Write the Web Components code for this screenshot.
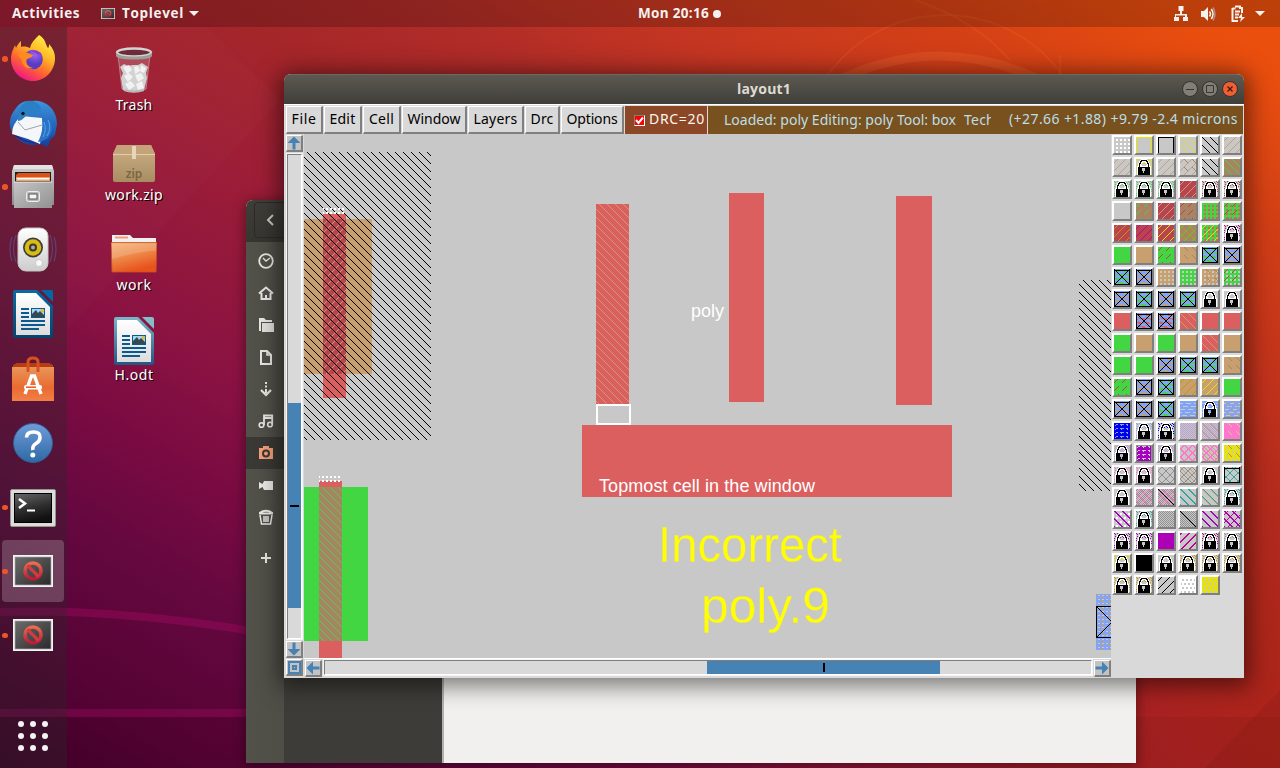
<!DOCTYPE html>
<html lang="en">
<head>
<meta charset="utf-8">
<title>Desktop</title>
<style>
html,body{margin:0;height:100%;overflow:hidden;background:#700a40}
</style>
</head>
<body>
<desktop-shell></desktop-shell>
<script>
function def(name, css, html, ready) {
  const t = document.createElement('template');
  t.innerHTML = '<style>*{box-sizing:border-box}' + css + '</style>' + html;
  customElements.define(name, class extends HTMLElement {
    connectedCallback() {
      if (this.shadowRoot) return;
      const root = this.attachShadow({ mode: 'open' });
      root.appendChild(document.importNode(t.content, true));
      if (ready) ready.call(this, root);
    }
  });
}

/* Text tracked so that it fills a given width */
def('fit-text', ':host{display:inline-block;white-space:nowrap}span{display:inline-block}', '<span><slot></slot></span>', function (root) {
  const s = root.querySelector('span'), want = +this.getAttribute('w'), n = this.textContent.length;
  const have = s.getBoundingClientRect().width;
  if (have) s.style.letterSpacing = (want - have) / n + 'px';
  this.style.width = want + 'px';
});

const noEntry = (id, w, h) => `<svg width="${w}" height="${h}" viewBox="0 0 40 32"><defs><linearGradient id="${id}a" x2="1" y2="1"><stop stop-color="#6c6c6c"/><stop offset="1" stop-color="#2b2b2b"/></linearGradient><linearGradient id="${id}b" x2="0" y2="1"><stop stop-color="#ef6a50"/><stop offset="1" stop-color="#b91c38"/></linearGradient></defs><rect width="40" height="32" fill="#f4f4f2"/><rect x="2" y="2" width="36" height="28" fill="url(#${id}a)" stroke="#aaa" stroke-width=".7"/><circle cx="20" cy="16" r="8" fill="none" stroke="url(#${id}b)" stroke-width="3.6"/><path d="M14.4 10.4l11.2 11.2" stroke="#d43a40" stroke-width="3.4"/></svg>`;

const writer = (id, a, b, c) => `<svg width="40" height="48" viewBox="0 0 40 48"><defs><linearGradient id="${id}" x2="0" y2="1"><stop stop-color="${a}"/><stop offset="1" stop-color="${b}"/></linearGradient><linearGradient id="${id}p" x2="0" y2="1"><stop stop-color="#fff"/><stop offset="1" stop-color="#dcdcdc"/></linearGradient></defs><path d="M2 0h22l16 16v30q0 2-2 2H2q-2 0-2-2V2q0-2 2-2z" fill="url(#${id})"/><path d="M3 3h20l14 14v28H3z" fill="url(#${id}p)"/><path d="M28 0h10q2 0 2 2v10z" fill="${c}"/><path d="M8 19h8M8 23h8M8 27h8M8 31h24M8 35h24M8 39h18" stroke="#0a5a90" stroke-width="2"/><path d="M18 18h14v10H18z" fill="#0a5a90"/><path d="M19 19h12v8H19z" fill="#a6d8f4"/><path d="M19 27v-3l4-4 2 3 2-2 4 4v2z" fill="#354a50"/><circle cx="29.5" cy="20.5" r="1.8" fill="#e5b73b"/></svg>`;

const ART = {
  firefox: `<svg width="46" height="48" viewBox="0 0 46 48"><defs><linearGradient id="fa" x1=".85" y1=".05" x2=".3" y2="1"><stop stop-color="#fff14a"/><stop offset=".35" stop-color="#ffbc27"/><stop offset=".65" stop-color="#ff6a2c"/><stop offset="1" stop-color="#f0138a"/></linearGradient><radialGradient id="fb" cx=".6" cy=".25"><stop stop-color="#a064ee"/><stop offset="1" stop-color="#5a3cc4"/></radialGradient></defs><path d="M29 1c7 4 6 9 9 13 1-1 1-2 1-4 4 4 6 9 6 14 0 13-10 23-22 23S1 37 1 25C1 18 4 14 5 11l1 3c1-3 4-6 5-7v6c3-1 7 0 9 1 1-5 4-8 9-13z" fill="url(#fa)"/><circle cx="23" cy="25.500" r="9.800" fill="url(#fb)"/><path d="M7 21c3-3 6-4 11-2l5 2c-1 3-4 3-6 4-2 4 1 8 6 9-6 2-11-2-11-8-2-2-3-4-5-5z" fill="#ff8a1f"/><path d="M22 17c4-1 9 1 10 4l-5-1z" fill="#8b3ccf"/></svg>`,
  thunderbird: `<svg width="50" height="48" viewBox="0 0 50 48" style="margin-top:4px"><defs><linearGradient id="ta" x2="0" y2="1"><stop stop-color="#3d94de"/><stop offset="1" stop-color="#133f9a"/></linearGradient></defs><path d="M20 1l4 0c13-2 25 8 25 23l-2 11-5 5-2 7-7-3q-20 5-30-14Q-1 19 8 8q5-7 12-7z" fill="url(#ta)"/><path d="M5 35q10 8 28 9l-13-3q-10-2-15-11z" fill="#321d75"/><path d="M13 16l21 2 1 8-3 18-12-5-16-5q0-10 9-18z" fill="#f4f6f9"/><path d="M10 22l7 8 17-5" fill="none" stroke="#9ca5ab"/><path d="M20 1c-8 4-11 9-10 20 7-1 7-7 13-8 9 0 12-2 9-7-3-4-8-6-12-5z" fill="#2b7fc4"/><circle cx="15" cy="13.500" r="1.700" fill="#111"/><path d="M34 18c1 10 0 16-4 24 7-1 12-4 14-12 1-10-6-12-10-12z" fill="#2a72c8"/><path d="M36 22q3 8-1 15M40 20q4 8-1 16" stroke="#4fa4e8" fill="none"/></svg>`,
  files: `<svg width="44" height="46" viewBox="0 0 44 46"><defs><linearGradient id="ca" x2="0" y2="1"><stop stop-color="#cfcfcf"/><stop offset="1" stop-color="#8c8c8c"/></linearGradient><linearGradient id="cb" x2="1" y2="1"><stop stop-color="#c5c5c5"/><stop offset="1" stop-color="#929292"/></linearGradient></defs><path d="M3 2h38l2 6v34H1V8z" fill="url(#ca)"/><path d="M3 2h38l1 4H2z" fill="#e3e3e3"/><path d="M4 9h36v10H4z" fill="#1e1e1e"/><path d="M5 12l2-2h32v8H5z" fill="#d9521d"/><path d="M5 14h34v4H5z" fill="#f0a064"/><path d="M6 15h32v1.500H6z" fill="#fff"/><path d="M3 19h38v26H3z" fill="url(#cb)"/><path d="M3 19h38" stroke="#e8e8e8"/><rect x="15.500" y="28.500" width="13" height="10" rx="2" fill="#b8b8b8" stroke="#eee"/><rect x="18" y="31" width="8" height="5" fill="#f5f5f5" stroke="#555"/></svg>`,
  rhythmbox: `<svg width="50" height="46" viewBox="0 0 50 46"><defs><linearGradient id="ra" x2="0" y2="1"><stop stop-color="#fff"/><stop offset="1" stop-color="#ccc"/></linearGradient></defs><g fill="none" stroke="#5a5690" stroke-opacity=".65" stroke-width="1.200"><path d="M8 8q-5 13 0 27M4 10q-4 12 0 24M42 8q5 13 0 27M46 10q4 12 0 24"/></g><rect x="10" y="1" width="30" height="43" rx="8" fill="url(#ra)" stroke="#c4c4c4"/><circle cx="25" cy="20.500" r="10" fill="#3b3b3b"/><circle cx="25" cy="20.500" r="8.300" fill="#d8bb13"/><circle cx="25" cy="20.500" r="4" fill="#3c3a30"/><circle cx="25" cy="20.500" r="2" fill="#aaa"/><circle cx="31" cy="36" r="3.500" fill="#f9f9f9" stroke="#ccc"/></svg>`,
  writer: writer('wa', '#0a69a5', '#05436d', '#0369a5'),
  software: `<svg width="44" height="46" viewBox="0 0 44 46"><defs><linearGradient id="sa" x2="0" y2="1"><stop stop-color="#e8955a"/><stop offset=".6" stop-color="#ea6b30"/><stop offset="1" stop-color="#f08048"/></linearGradient></defs><path d="M2 9l4-2h32l4 2v5H2z" fill="#b83c12"/><path d="M1 11h42v34H1z" fill="url(#sa)"/><path d="M17 16V6q0-4 5-4t5 4v10" fill="none" stroke="#d9501f" stroke-width="3"/><path d="M14 38l6.500-18h3L30 38" fill="none" stroke="#fff" stroke-width="3.400"/><rect x="13" y="29" width="18" height="4.500" rx="2" fill="#fff"/><path d="M15 31.200h10" stroke="#e8632a" stroke-width="1.600"/></svg>`,
  help: `<svg width="42" height="42" viewBox="0 0 42 42"><defs><linearGradient id="ha" x2="0" y2="1"><stop stop-color="#6f9cda"/><stop offset="1" stop-color="#2e69a4"/></linearGradient></defs><circle cx="21" cy="21" r="19.500" fill="url(#ha)" stroke="#2d5f94"/><path d="M14.500 15.500Q14.500 10 21.500 10T28 15.500Q28 19 24 21.500T21 28" fill="none" stroke="#fff" stroke-width="3.600"/><circle cx="20.800" cy="33" r="2.500" fill="#fff"/></svg>`,
  terminal: `<svg width="46" height="38" viewBox="0 0 46 38" style="margin-top:2px"><defs><linearGradient id="tm" x2=".3" y2="1"><stop stop-color="#666"/><stop offset=".6" stop-color="#2d2d2d"/><stop offset="1" stop-color="#111"/></linearGradient></defs><rect x=".5" y=".5" width="45" height="37" rx="1.500" fill="#dcdcda" stroke="#949490"/><rect x="4.500" y="4.500" width="37" height="29" fill="url(#tm)" stroke="#000"/><path d="M9 10l6 4.500L9 19" fill="none" stroke="#fff" stroke-width="2.600"/><path d="M17 21.500h8" stroke="#fff" stroke-width="2"/></svg>`,
  top1: noEntry('n1', 40, 32),
  top2: noEntry('n2', 40, 32),
  trash: `<svg width="38" height="46" viewBox="0 0 38 46"><path d="M3 8l4 34q12 5 24 0L35 8z" fill="#d7a3aa" fill-opacity=".3" stroke="#d0b0b4" stroke-opacity=".6"/><path d="M5 20l4-3 4 2 5-1 5 0 4-2 6 4-2 6 1 5-3 12q-10 5-21 0L6 31l2-5z" fill="#d2d2d2"/><path d="M8 20l6-2 3 5-5 4zM19 20l4-1 2 5-5 3zM26 18l5 3-2 5-4-2zM9 29l5-3 4 4-5 5zM20 28l6-2 3 5-6 4zM10 37l6-3 4 5-6 4zM21 37l6-3 2 7-6 2z" fill="#f2f2f2"/><ellipse cx="19" cy="5.500" rx="17" ry="4" fill="#6d2b3a" stroke="#d3d3cf" stroke-width="2.400"/><path d="M1 5.500v3q0 4 18 4t18-4v-3q-2 4-18 4T1 5.500z" fill="#9c9c98"/><path d="M9 43q10 3 20 0" fill="none" stroke="#b9b9b9" stroke-width="2"/></svg>`,
  zip: `<svg width="42" height="38" viewBox="0 0 42 38"><defs><linearGradient id="za" x2="0" y2="1"><stop stop-color="#cdb086"/><stop offset="1" stop-color="#a98d62"/></linearGradient></defs><path d="M4 0h34l4 9v26q0 2-2 2H2q-2 0-2-2V9z" fill="url(#za)"/><path d="M4 0h34l4 9H0z" fill="#c4a37b"/><path d="M0 9.500h42" stroke="#e3cda6"/><path d="M19 1h4v13h-4z" fill="#e5d5ba"/><text x="21" y="33" text-anchor="middle" font-family="Noto Sans" font-weight="600" font-size="12" fill="#7a6644">zip</text></svg>`,
  folder: `<svg width="46" height="40" viewBox="0 0 46 40"><defs><linearGradient id="fo" x2=".4" y2="1"><stop stop-color="#f3b274"/><stop offset=".5" stop-color="#ee8b4c"/><stop offset="1" stop-color="#e8531c"/></linearGradient></defs><path d="M1 2h18l3 3h23v9H1z" fill="#f1f1ef"/><path d="M4 3.500h13v2H4z" fill="#f39b74"/><path d="M0 9.500h46L45 39H1z" fill="url(#fo)" stroke="#c9511e" stroke-width=".8"/><path d="M1 10.500h44v7Q25 19 1 26z" fill="#fff" fill-opacity=".16"/></svg>`,
  odt: writer('wo', '#7ab8c8', '#255583', '#84bcc8')
};

def('dock-item', `:host{position:relative;display:flex;align-items:center;justify-content:center;width:62px;height:62px;margin-left:2px;border-radius:4px}
:host([active]){background:rgba(255,255,255,.2)}
:host([running])::before{content:"";position:absolute;left:0;top:29px;width:5.500px;height:5.500px;border-radius:50%;background:#ee5522}svg{display:block}`, '<div></div>', function (r) {
  r.querySelector('div').innerHTML = ART[this.getAttribute('icon')];
});

def('dock-bar', `:host{display:flex;flex-direction:column;width:67px;height:741px;background:rgba(42,42,42,.34);gap:2.120px;padding-top:0}
.grid{display:grid;grid-template-columns:repeat(3,6px);gap:6px;margin:auto auto 17px 18px}.grid i{width:6px;height:6px;border-radius:50%;background:#f4f2f3}`,
`<dock-item icon="firefox" running></dock-item><dock-item icon="thunderbird"></dock-item><dock-item icon="files" running></dock-item><dock-item icon="rhythmbox"></dock-item><dock-item icon="writer"></dock-item><dock-item icon="software"></dock-item><dock-item icon="help"></dock-item><dock-item icon="terminal" running></dock-item><dock-item icon="top1" running active></dock-item><dock-item icon="top2" running></dock-item><div class="grid"><i></i><i></i><i></i><i></i><i></i><i></i><i></i><i></i><i></i></div>`);

def('desktop-icon', `:host{display:flex;flex-direction:column;align-items:center;justify-content:flex-end;height:90px;width:112px;color:#fff;font:14px/20px "Noto Sans",sans-serif;text-shadow:1px 1px 0 #000}
div{height:49px;display:flex;align-items:flex-end;padding-bottom:2px;text-shadow:none}:host([icon=odt]) div{padding-bottom:0}svg{display:block}p{margin:0;height:22px}`, '<div></div><p><slot></slot></p>', function (r) {
  r.querySelector('div').innerHTML = ART[this.getAttribute('icon')];
});

def('top-bar', `:host{display:grid;grid-template-columns:638px auto 1fr;align-items:center;height:27px;background:rgba(0,0,0,.2);color:#f4f1ef;font:bold 13.500px/27px "Open Sans","Noto Sans",sans-serif}
.l{display:flex;align-items:center;padding-left:12px;height:27px}.l svg{margin-left:21px;margin-right:7px}.caret{width:0;height:0;border:5px solid transparent;border-top-color:#f4f1ef;border-bottom:0;margin-left:5px}
.c{display:flex;align-items:center;gap:4px}.c i{width:8px;height:8px;border-radius:50%;background:#f4f1ef}
.r{display:flex;justify-content:flex-end;align-items:center;padding-right:15px}.r svg{margin-right:11px}.r .caret{margin:0}`,
`<div class="l"><fit-text w="68">Activities</fit-text>${noEntry('n0', 14, 11)}<fit-text w="62">Toplevel</fit-text><b class="caret"></b></div>
<div class="c"><fit-text w="71">Mon 20:16</fit-text><i></i></div>
<div class="r"><svg width="16" height="16" fill="#f4f1ef"><path d="M5.500 0h5v5H9v3h5v3h1v4h-5v-4h2V9.500H3V11h3v4H1v-4h1V8h5V5H5.500z"/></svg>
<svg width="16" height="16" fill="#f4f1ef" style="margin-right:14px"><path d="M1 5h3l4-4v14l-4-4H1z"/><path d="M9.500 5.500q2 2.500 0 5M11.300 3q3.500 5 0 10" fill="none" stroke="#f4f1ef" stroke-width="1.500"/><path d="M13 1.500q4 6.500 0 13" fill="none" stroke="#b88a78" stroke-width="1.500"/></svg>
<svg width="16" height="18" style="margin-right:9px"><path d="M5 1.500h5V3h2v5M2.500 3v13H8M2.500 3.500h3" fill="none" stroke="#f4f1ef" stroke-width="2"/><path d="M5 6.500h5M5 9.500h4M5 12.500h3" stroke="#f4f1ef" stroke-width="1.800"/><path d="M12 8l-4 5h3l-1 4 5-5h-3z" fill="#f4f1ef"/></svg><b class="caret"></b></div>`);

const SIDE = [
  '<circle cx="8" cy="8" r="6.800" stroke-width="1.800"/><path d="M5 5l3 3 4-3" stroke-width="1.400"/>',
  '<path d="M1 8.500L8 2.500l7 6M3.500 8v6h9V8M8 14v-4" stroke-width="2"/>',
  '<path d="M1 1h5l2 2h6v2H3v9H1z" fill="#e8e8e4" stroke="none"/><path d="M4 6h12v9H4z" fill="#e0e0dc" stroke="none"/>',
  '<path d="M3 2h6l4 4v9H3z" stroke-width="2"/><path d="M9 2v4h4"/>',
  '<path d="M8 1v2M8 4.500v2M8 8v4" stroke-width="2"/><path d="M3 9l5 5 5-5" stroke-width="2.200"/>',
  '<circle cx="3.500" cy="12" r="2.300"/><circle cx="12" cy="11.500" r="2.300"/><path d="M6 12V2.500h8.200V11.500M6 5h8" stroke-width="1.800"/>',
  '<path d="M5 1h6v2h4v11H1V3h4z" fill="#f59f7a" stroke="none"/><circle cx="8" cy="8.500" r="3" stroke="#3a3935" stroke-width="2"/>',
  '<path d="M6 4h9v9H6L4.500 10 1 12V5l3.500 2z" fill="#e8e8e4" stroke="none"/>',
  '<path d="M1.500 4Q8-.5 14.500 4M1 4.500h14" stroke-width="1.800"/><path d="M2 6l1.500 9h9L14 6M6 7v6M8 7v6M10 7v6" stroke-width="1.500"/>'
];
def('files-window', `:host{display:grid;grid-template:42px 1fr/38px 160px 1fr;width:890px;height:563px;border-radius:7px 7px 0 0;overflow:hidden;background:#f1f0ee}
.h{grid-column:1/4;background:linear-gradient(#3f3e39,#363530);display:flex;padding:2px 0 0 8px}.h i{width:40px;height:36px;border:1px solid #2c2b28;border-radius:4px;display:flex;align-items:center;padding-left:10px}
.s{background:linear-gradient(90deg,#53524a,#4e4d46);display:flex;flex-direction:column;padding-top:3px}.s div{height:32px;flex:none;padding-left:1px;display:flex;align-items:center;justify-content:center}.s .a{background:#3a3935}.s .p{margin-top:9px}
.m{background:#3d3c38;border-right:2px solid #b3b1ad}`,
`<div class="h"><i><svg width="10" height="14" fill="none" stroke="#c9c7c0" stroke-width="2"><path d="M8 2L3 7l5 5"/></svg></i></div><div class="s">${SIDE.map((p, i) => `<div class="${i == 6 ? 'a' : ''}"><svg width="16" height="16" fill="none" stroke="#e8e8e4" stroke-width="1.600">${p}</svg></div>`).join('')}<div class="p"><svg width="10" height="10" stroke="#e8e8e4" stroke-width="2"><path d="M5 0v10M0 5h10"/></svg></div></div><div class="m"></div><div></div>`);

/* Layer swatches: each is a list of drawing operations on a 16x16 grid */
const COL = { G:'#42d642',T:'#c8a070',R:'#dc5f5f',D:'#b84450',N:'#a88464',B:'#80a4f8',S:'#c8c8c8',Y:'#e8e400',K:'#000',W:'#fff',M:'#a800c0',P:'#ff78c8',C:'#30a8a0',H:'#909090',Z:'#0000f0',L:'#b8a0d0',O:'#c89400',V:'#c00090' };
const LOCK = ['.....wwwwww.....','....wkkkkkkw....','...wkkwwwwkkw...','...wkww..wwkw...','..wkkw....wkkw..','..wkw......wkw..','..wkww....wwkw..','.wwkwwwwwwwwkww.','.wkkkkkkkkkkkkw.','.wkkkk...kkkkkw.','.wkkkk...kkkkkw.','.wkkkk...kkkkkw.','.wkkkkk.kkkkkkw.','.wkkkkk.kkkkkkw.','.wkkkkkkkkkkkkw.','.wkkkkkkkkkkkkw.'];
const OPS = {
  s: () => 1,
  d: (x, y) => (x - y + 16) % 8 == 0,
  u: (x, y) => (x + y) % 8 == 3,
  e: (x, y) => (x - y + 16) % 8 < 2,
  v: (x, y) => (x + y) % 8 < 2,
  q: (x, y) => (x + y) % 8 == 3 && x % 8 < 5,
  r: (x, y) => (x - y + 16) % 8 == 4 && x % 8 > 3,
  o: (x, y) => x % 4 > 1 && y % 4 > 1,
  p: (x, y) => x > 0 && x < 15 && y > 1 && y % 4 > 1 && (x + (y >> 2 & 1) * 2) % 4 > 1,
  w: (x, y) => y % 3 != 2 || (x + y) % 8 > 4,
  z: (x, y) => y % 4 == 1 ? (x + y) % 8 < 6 : y % 4 == 2 ? (x + y) % 8 > 3 : y % 4 == 0 && x % 8 == 2,
  i: (x, y) => x > 1 && x < 14 && y % 4 == 1 && x % 6 < 4 || y % 4 == 2 && x % 6 == 1,
  k: (x, y) => (x + y) % 2,
  m: (x, y) => (x + y) % 8 == 3 || (x - y + 16) % 8 == 4,
  n: (x, y) => (x + y) % 8 == 3 || (x - y + 16) % 8 == 4 || (x + y) % 8 == 4 || (x - y + 16) % 8 == 5,
  c: (x, y) => (x * 5 + y * 3) % 7 < 2 && (x < 3 || x > 12 || y < 5),
  t: (x, y) => (x * 5 + y * 3) % 7 < 3,
  f: (x, y) => x == 0 || x == 15 || y == 0,
  b: (x, y) => x == 0 || x == 15 || y == 1 || y == 15,
  x: (x, y) => x == y || x == 15 - y,
  h: (x, y) => Math.abs(x - y) < 1
};
def('layer-tile', ':host{display:block;width:20px;height:20px;border:2px solid;border-color:#fff #7f7f7f #7f7f7f #fff;outline:0;background:#d9d9d9}canvas{display:block;width:16px;height:16px}', '<canvas width="16" height="16"></canvas>', function (r) {
  const g = r.querySelector('canvas').getContext('2d');
  g.fillStyle = COL.S; g.fillRect(0, 0, 16, 16);
  let code = this.getAttribute('paint') || '';
  code = code.replace(/X(.)/g, 'sBz$1xKbK');
  for (let i = 0; i < code.length;) {
    if (code[i] == 'l') {
      LOCK.forEach((row, y) => [...row].forEach((p, x) => { if (p != '.') { g.fillStyle = p == 'k' ? '#000' : '#fff'; g.fillRect(x, y, 1, 1); } }));
      i++; continue;
    }
    const f = OPS[code[i]]; g.fillStyle = COL[code[i + 1]]; i += 2;
    for (let y = 0; y < 16; y++) for (let x = 0; x < 16; x++) if (f(x, y)) g.fillRect(x, y, 1, 1);
  }
});

const PAL = `oW fY fK dY dK uT|uT cYl uT uTrN dK sNdG|cNcGl cNcGl cNcGl sDuT cDl cDl|- sNqGrR sDuT sNqD sGoR sGoRqD|sDuO sDuV sDuY sNuGdO sGoRuY cVl|sG sT sGqD sTrN XG XT|XG XT sToS sGoS sToSrN sGoSqD|XT XG XT XG l l|sR XR XR sRdT sR sR|sG sT sG sT sRdT sT|sG sG XT XG XG sTrN|sGqD XT XG sTuO sTuY sG|XT XT XG wB wBl wBdT|sZiSiB cBl cZl kL kLdT sPrS|kLl sMiSfH kLl nP nPdT sYpSrO|cPl cPl mH mHdT l uCdCbK|l kHmP kHmPhK eC eCdT cCl|oWeM cCl kH kHhK eM eMuV|cMl cMl sMpV vV cVl cHl|cYl sK l cOl cOl cOl|cOl cOl uK sWpS sYpS`;
def('layer-palette', ':host{display:grid;grid-template-columns:repeat(6,20px);grid-auto-rows:20px;gap:2px;padding:1px 0 0 1px;align-content:start;background:#d9d9d9}',
  PAL.split(/[| ]/).map(p => `<layer-tile paint="${p == '-' ? '' : p}"></layer-tile>`).join(''));

def('menu-button', ':host{display:flex;align-items:center;justify-content:center;height:28px;background:#d9d9d9;border:solid;border-width:1px 2px 2px 1px;border-color:#fff #7f7f7f #7f7f7f #fff;color:#000;margin-right:1px}', '<slot></slot>');

def('arrow-button', ':host{display:block;width:17px;height:17px;background:#c3c3c3;border:solid;border-width:1px 2px 2px 1px;border-color:#fff #7f7f7f #7f7f7f #fff}svg{display:block}', '<svg width="14" height="14" fill="#4682b4"></svg>', function (r) {
  const k = this.getAttribute('dir');
  r.querySelector('svg').innerHTML = k == 'box' ? '<path d="M1 1h13v13H1zM3 3v9h9V3z" fill-rule="evenodd"/><path d="M5 5h5v5H5zM7 7v1h1V7z" fill-rule="evenodd"/>' :
    `<path transform="rotate(${{ up: 0, right: 90, down: 180, left: 270 }[k]} 7 7)" d="M7 .5l6.500 6.500h-5v6.500h-3V7H.5z"/>`;
});

def('scroll-track', ':host{display:flex;background:#d9d9d9;border:1px solid;border-color:#7f7f7f #fff #fff #7f7f7f;outline:1px solid #f4f4f4}:host([vertical]){flex-direction:column}i{background:#4682b4;display:flex;align-items:center;justify-content:center}b{background:#000}', '<u></u><i><b></b></i>', function (r) {
  const v = this.hasAttribute('vertical'), u = r.querySelector('u'), i = r.querySelector('i'), b = r.querySelector('b');
  const k = v ? 'height' : 'width';
  u.style[k] = this.getAttribute('at') + 'px'; i.style[k] = this.getAttribute('size') + 'px';
  b.style.cssText = v ? 'width:9px;height:2px' : 'width:2px;height:9px';
});

const px = f => { let s = ''; for (let y = 0; y < 8; y++) for (let x = 0; x < 8; x++) if (f(x, y)) s += `M${x} ${y}h1v1h-1z`; return s; };
const pat = (id, f, c) => `<pattern id="${id}" width="8" height="8" patternUnits="userSpaceOnUse"><path d="${px(f)}" fill="${c}"/></pattern>`;
const back = (x, y) => (x - y + 8) % 8 == 3, fwd = (x, y) => (x + y) % 8 == 3;
const dots = (x, y) => `<path fill="#fff" d="M${x} ${y}h1v2h-1zM${x} ${y + 4}h1v2h-1z${[3, 7, 11, 15, 19].map(d => `M${x + d} ${y}h2v2h-2zM${x + d} ${y + 4}h2v2h-2z`).join('')}"/>`;
def('layout-canvas', ':host{display:block;background:#c8c8c8;overflow:hidden}svg{display:block}text{font-family:"Liberation Sans",Arial,sans-serif}',
`<svg width="807" height="523" viewBox="304 135 807 523"><defs>${pat('bk', back, '#000')}${pat('bt', back, '#c8a070')}${pat('bg', back, '#42d642')}${pat('ft', fwd, '#c8a070')}${pat('bw', (x, y) => y % 4 == 3 && x % 4 > 1, '#c8c8c8')}${pat('bo', (x, y) => y % 4 == 1 && x % 8 > 3 || y % 8 == 2 && x < 2, '#c8a070')}</defs>
<g shape-rendering="crispEdges"><rect x="304" y="219" width="68" height="155" fill="#c8a070"/><rect x="323" y="214" width="23" height="184" fill="#dc5f5f"/><rect x="323" y="219" width="23" height="155" fill="#b84450"/><rect x="323" y="219" width="23" height="155" fill="url(#ft)"/><rect x="304" y="152" width="127" height="288" fill="url(#bk)"/>${dots(323, 208)}
<rect x="304" y="487" width="64" height="154" fill="#42d642"/><rect x="319" y="481" width="23" height="177" fill="#dc5f5f"/><rect x="319" y="487" width="23" height="154" fill="#a88464"/><rect x="319" y="487" width="23" height="154" fill="url(#bg)"/>${dots(319, 476)}
<rect x="596" y="204" width="33" height="200" fill="#dc5f5f"/><rect x="596" y="204" width="33" height="200" fill="url(#bt)"/><rect x="729" y="193" width="35" height="209" fill="#dc5f5f"/><rect x="896" y="196" width="36" height="209" fill="#dc5f5f"/><rect x="582" y="425" width="370" height="72" fill="#dc5f5f"/><rect x="597" y="405" width="33" height="19" fill="none" stroke="#fff" stroke-width="2"/>
<rect x="1079" y="280" width="32" height="211" fill="url(#bk)"/><rect x="1096" y="594" width="15" height="56" fill="#80a4f8"/><rect x="1096" y="594" width="15" height="56" fill="url(#bw)"/><rect x="1096" y="594" width="15" height="56" fill="url(#bo)"/><path d="M1112 606.500h-15.500v31h15.500M1097 607l15 15-15 15" fill="none" stroke="#000"/></g>
<text x="691" y="317" font-size="18" fill="#fff" textLength="33">poly</text><text x="599" y="492" font-size="18" fill="#fff" textLength="216">Topmost cell in the window</text>
<g font-size="50" fill="#ff0" stroke="#c8c8c8" stroke-width=".3"><text x="658" y="562" textLength="184" lengthAdjust="spacingAndGlyphs">Incorrect</text><text x="701" y="623" textLength="129" lengthAdjust="spacingAndGlyphs">poly.9</text></g></svg>`);

def('layout-window', `:host{display:flex;flex-direction:column;width:960px;height:604px;border-radius:7px 7px 0 0;overflow:hidden;box-shadow:0 3px 22px 5px rgba(0,0,0,.5);background:#d9d9d9;font:14px/24px "Noto Sans",sans-serif}
.t{height:30px;background:linear-gradient(#5b5951,#3f3e39);border-top:1px solid #6b6a60;display:grid;grid-template-columns:1fr auto 1fr;align-items:center;color:#dfdbd2;font:bold 14px/26px "Open Sans",sans-serif;padding-bottom:2px}
.w{display:flex;justify-content:flex-end;gap:4px;padding-right:6px}.w i{width:16px;height:16px;border-radius:50%;background:#807e77;border:1px solid #33322e}.w i:last-child{background:#ef5f33}.w svg{display:block}
.m{height:30px;display:flex;align-items:flex-start;padding:1px 0 0 2px;border-top:1px solid #fff;background:#d9d9d9}.m fit-text{line-height:20px;margin-bottom:2px}
.d{width:82px;height:28px;background:#8b4726;color:#fff5ee;display:flex;align-items:center;padding-left:9px;gap:4px}.d i{width:11px;height:11px;background:#f00;border:1px solid;border-color:#7f7f7f #fff #fff #7f7f7f}.d svg{display:block}
.s{flex:1;height:28px;margin:0 1px 0 1px;background:#79511f;color:#b9dfe8;display:flex;align-items:center;padding-left:16px}.clip{width:267px;overflow:hidden;margin-right:18px;white-space:nowrap;height:24px}
.b{display:grid;grid-template:524px 20px/20px 807px 1fr;flex:1}.v{display:flex;flex-direction:column;gap:2px;padding:1px 0 0 2px}.v scroll-track{width:15px;height:485px;margin-left:1px}
layout-canvas{padding-top:1px}.c{padding:1px 0 0 2px}.hz{display:flex;gap:2px;padding:1px 0 0 1px;border-top:1px solid #fff}.hz scroll-track{width:768px;height:15px}.hz,.c{margin-top:0}layer-palette{grid-column:3;grid-row:1/3}`,
`<div class="t"><span></span><fit-text w="54">layout1</fit-text><div class="w"><i><svg width="14" height="14" stroke="#373631"><path d="M3 7.500h8"/></svg></i><i><svg width="14" height="14" fill="none" stroke="#373631"><path d="M3.500 3.500h7v7h-7z"/></svg></i><i><svg width="14" height="14" stroke="#47190b" stroke-width="1.300"><path d="M4.500 4.500l5 5m0-5l-5 5"/></svg></i></div></div>
<div class="m"><menu-button style="width:37px"><fit-text w="25">File</fit-text></menu-button><menu-button style="width:38px"><fit-text w="26">Edit</fit-text></menu-button><menu-button style="width:38px"><fit-text w="25">Cell</fit-text></menu-button><menu-button style="width:65px"><fit-text w="53">Window</fit-text></menu-button><menu-button style="width:56px"><fit-text w="44">Layers</fit-text></menu-button><menu-button style="width:35px"><fit-text w="23">Drc</fit-text></menu-button><menu-button style="width:63px"><fit-text w="51">Options</fit-text></menu-button><div class="d"><i><svg width="9" height="9" fill="none" stroke="#fff" stroke-width="2"><path d="M1 4l2.500 3L8 1.500"/></svg></i><fit-text w="56">DRC=20</fit-text></div><div class="s"><div class="clip"><fit-text w="232">Loaded: poly Editing: poly Tool: box</fit-text><fit-text w="31" style="margin-left:8px">Tech</fit-text></div><fit-text w="229">(+27.66 +1.88) +9.79 -2.4 microns</fit-text></div></div>
<div class="b"><div class="v"><arrow-button dir="up"></arrow-button><scroll-track vertical at="248" size="205"></scroll-track><arrow-button dir="down"></arrow-button></div><layout-canvas></layout-canvas><div class="c"><arrow-button dir="box"></arrow-button></div><div class="hz"><arrow-button dir="left"></arrow-button><scroll-track at="382" size="233"></scroll-track><arrow-button dir="right"></arrow-button></div><layer-palette></layer-palette></div>`);

def('desktop-shell', `:host{display:grid;position:relative;grid-template:27px 741px/67px 1fr;width:1280px;height:768px;overflow:hidden;background:radial-gradient(circle at 1300px 780px,rgba(182,38,8,.6),rgba(182,38,8,0) 620px),linear-gradient(to top right,#3f0029 0,#560335 9%,#650840 19%,#7a0b42 27%,#8b1342 35%,#9c1d37 48%,#a52629 58%,#b02c28 66%,#c33522 74%,#d34016 85%,#e94e0e 95%,#ee500c)}
.bg{position:absolute;inset:0}top-bar{grid-column:1/3;z-index:1}dock-bar{z-index:1}.icons{z-index:1;display:flex;flex-direction:column;padding:0 0 0 11px}
files-window{position:absolute;left:246px;top:200px;box-shadow:0 2px 12px 2px rgba(0,0,0,.35);z-index:2}layout-window{position:absolute;left:284px;top:74px;z-index:3}`,
`<svg class="bg" width="1280" height="768" fill="none"><path d="M0 612Q120 608 270 634" stroke="#a40a62" stroke-opacity=".42" stroke-width="8"/><path d="M0 713h250" stroke="#a40a62" stroke-opacity=".38" stroke-width="8"/><path d="M0 717H1280V768H0z" fill="#200" fill-opacity=".06"/><path d="M820 90Q938 22 1060 90" stroke="#ff7a3a" stroke-opacity=".22" stroke-width="9"/><circle cx="945" cy="160" r="145" stroke="#ff7a3a" stroke-opacity=".15" stroke-width="2"/><path d="M915 0Q975 20 1010 60M1060 55v20" stroke="#ff7a3a" stroke-opacity=".15" stroke-width="2"/><path d="M67 27h140L280 100 67 330z" fill="#fff" fill-opacity=".015"/><path d="M1280 690L1205 768H1280z" fill="#000" fill-opacity=".06"/></svg>
<top-bar></top-bar><dock-bar></dock-bar><div class="icons"><desktop-icon icon="trash"><fit-text w="37">Trash</fit-text></desktop-icon><desktop-icon icon="zip"><fit-text w="58">work.zip</fit-text></desktop-icon><desktop-icon icon="folder"><fit-text w="35">work</fit-text></desktop-icon><desktop-icon icon="odt"><fit-text w="39">H.odt</fit-text></desktop-icon></div>
<files-window></files-window><layout-window></layout-window>`);
</script>
</body>
</html>
